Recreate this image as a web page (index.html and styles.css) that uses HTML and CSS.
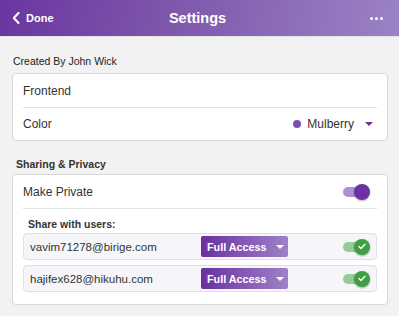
FILE: index.html
```html
<!DOCTYPE html>
<html lang="en">
<head>
  <meta charset="UTF-8" />
  <title>Settings</title>
  <link rel="stylesheet" href="styles.css">
</head>
<body>
  <header class="topbar">
    <div class="back">
      <svg width="8" height="12" viewBox="0 0 8 12"><path d="M6.5 1 L1.8 6 L6.5 11" fill="none" stroke="#fff" stroke-width="2" stroke-linecap="round" stroke-linejoin="round"/></svg>
      <span>Done</span>
    </div>
    <h1>Settings</h1>
    <div class="more"><i></i><i></i><i></i></div>
  </header>

  <main class="content">
    <p class="section-title">Created By John Wick</p>
    <div class="card">
      <div class="row">Frontend</div>
      <div class="row">
        <span>Color</span>
        <span class="color-pick"><b class="swatch"></b>Mulberry<b class="caret"></b></span>
      </div>
    </div>

    <p class="section-title strong">Sharing &amp; Privacy</p>
    <div class="card">
      <div class="row">
        <span>Make Private</span>
        <span class="toggle purple"><b></b></span>
      </div>
      <div class="share">
        <p class="share-title">Share with users:</p>
        <div class="user">
          <span class="email">vavim71278@birige.com</span>
          <span class="access">Full Access<b class="caret white"></b></span>
          <span class="toggle green"><b><svg width="8" height="7" viewBox="0 0 8 7"><path d="M1 3.6 L3 5.5 L7 1.2" fill="none" stroke="#fff" stroke-width="1.4" stroke-linecap="round" stroke-linejoin="round"/></svg></b></span>
        </div>
        <div class="user">
          <span class="email">hajifex628@hikuhu.com</span>
          <span class="access">Full Access<b class="caret white"></b></span>
          <span class="toggle green"><b><svg width="8" height="7" viewBox="0 0 8 7"><path d="M1 3.6 L3 5.5 L7 1.2" fill="none" stroke="#fff" stroke-width="1.4" stroke-linecap="round" stroke-linejoin="round"/></svg></b></span>
        </div>
      </div>
    </div>
  </main>
</body>
</html>
```

FILE: styles.css
```css
* { box-sizing: border-box; }

body {
  margin: 0;
  background: #f2f2f2;
  font-family: 'Liberation Sans', Arial, sans-serif;
  color: #222;
}

.topbar {
  height: 37px;
  display: flex;
  align-items: center;
  justify-content: space-between;
  padding: 0 16px 0 12px;
  background: linear-gradient(100deg, #6a35a0 0%, #8461b0 55%, #9b82c6 100%);
  color: #fff;
  border-bottom: 1px solid #e3e3e3;
}

.back {
  display: flex;
  align-items: center;
  gap: 6px;
  font-size: 11px;
  font-weight: bold;
  width: 60px;
}

.topbar h1 {
  margin: 0;
  font-size: 14.5px;
  font-weight: bold;
}

.more {
  width: 60px;
  display: flex;
  justify-content: flex-end;
  gap: 2px;
}

.more i {
  width: 3px;
  height: 3px;
  border-radius: 50%;
  background: #fff;
}

.content {
  padding: 8px 11px 0 12px;
}

.section-title {
  margin: 10px 0 6px 1px;
  font-size: 10.5px;
  color: #222;
}

.section-title.strong {
  margin: 17px 0 4px 4px;
  font-weight: bold;
  color: #333;
}

.card {
  background: #fff;
  border: 1px solid #d8d8d8;
  border-radius: 4px;
  padding: 0 10px;
}

.row {
  height: 33px;
  display: flex;
  align-items: center;
  justify-content: space-between;
  font-size: 12px;
  color: #333;
}

.row + .row {
  border-top: 1px solid #e2e2e2;
}

.color-pick {
  display: flex;
  align-items: center;
  font-size: 12px;
  margin-right: 4px;
}

.swatch {
  width: 8px;
  height: 8px;
  border-radius: 50%;
  background: #7b4fb4;
  margin-right: 6px;
}

.caret {
  width: 0;
  height: 0;
  border-left: 4px solid transparent;
  border-right: 4px solid transparent;
  border-top: 4px solid #6a2fa0;
  margin-left: 11px;
}

.caret.white {
  border-top-color: #fff;
  margin-left: 9px;
}

.toggle {
  position: relative;
  flex-shrink: 0;
  width: 26px;
  height: 10px;
  border-radius: 5px;
  margin-right: 8px;
}

.toggle b {
  position: absolute;
  right: -1px;
  top: -3px;
  width: 16px;
  height: 16px;
  border-radius: 50%;
  display: flex;
  align-items: center;
  justify-content: center;
  box-shadow: 0 1px 2px rgba(0, 0, 0, 0.3);
}

.toggle.purple { background: #ad8fd4; }
.toggle.purple b { background: #6c2fa4; }

.toggle.green { background: #97cc97; }
.toggle.green b { background: #3f9f45; }

.share {
  border-top: 1px solid #e2e2e2;
  padding: 9px 0 12px;
}

.share-title {
  margin: 0 0 3px 5px;
  font-size: 10.5px;
  font-weight: bold;
  color: #333;
}

.user {
  height: 27px;
  display: flex;
  align-items: center;
  background: #f6f6fa;
  border: 1px solid #e0e0e4;
  border-radius: 4px;
  padding-left: 6px;
  margin-bottom: 5px;
}

.user:last-child { margin-bottom: 0; }

.email {
  width: 171px;
  flex-shrink: 0;
  font-size: 11.5px;
  color: #333;
}

.access {
  display: flex;
  align-items: center;
  flex-shrink: 0;
  white-space: nowrap;
  height: 21px;
  width: 87px;
  padding-left: 6px;
  border-radius: 2px;
  background: linear-gradient(90deg, #6a2fa0 0%, #8a62b8 60%, #9c82c8 100%);
  color: #fff;
  font-size: 10.8px;
  font-weight: bold;
}

.user .toggle {
  margin-left: auto;
  margin-right: 7px;
}
```
